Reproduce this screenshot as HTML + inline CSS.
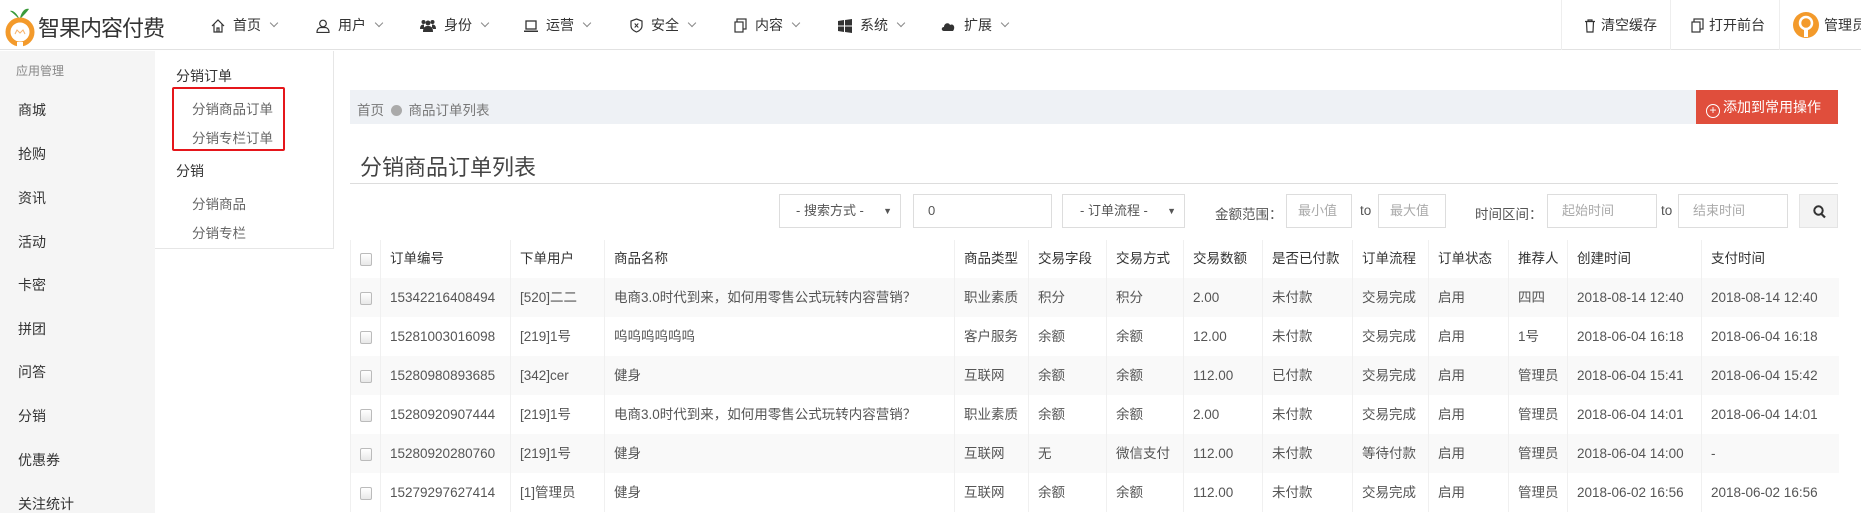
<!DOCTYPE html>
<html><head><meta charset="utf-8"><style>
*{margin:0;padding:0;box-sizing:border-box}
body{width:1861px;height:513px;overflow:hidden;background:#fff;font-family:"Liberation Sans","Noto Sans CJK SC",sans-serif;color:#555;position:relative;font-size:14px}
.a{position:absolute;white-space:nowrap}
.hdr{left:0;top:0;width:1861px;height:50px;border-bottom:1px solid #e2e2e2;background:#fff}
.nav{top:16px;font-size:14px;color:#333;line-height:18px}
.nav svg{vertical-align:-3px;margin-right:8px}
.chev{display:inline-block;width:6px;height:6px;border-right:1px solid #888;border-bottom:1px solid #888;transform:rotate(45deg);margin-left:10px;vertical-align:4px}
.sep{top:0;width:1px;height:50px;background:#eee}
.side{left:0;top:51px;width:155px;height:462px;background:#f5f5f5}
.sub{left:155px;top:51px;width:179px;height:198px;background:#fff;border-right:1px solid #e6e6e6;border-bottom:1px solid #e6e6e6}
.si{left:18px;font-size:14px;color:#333}
.inp{height:34px;border:1px solid #ddd;background:#fff;font-size:13px;color:#aaa;padding:0 0 0 14px;line-height:32px}
table{border-collapse:collapse;table-layout:fixed;position:absolute;left:350px;top:240px;width:1488px}
td,th{height:39px;line-height:39px;padding:0 0 0 9px;font-size:13.5px;text-align:left;white-space:nowrap;overflow:hidden;border-left:1px solid #f0f0f0;vertical-align:middle}
th{font-weight:normal;color:#333;height:38px;line-height:38px;background:#fff}
tr:nth-child(even) td{background:#f9f9f9}
td{color:#555}
.cb{display:inline-block;width:12px;height:13px;border:1px solid #bbb;border-radius:2px;background:linear-gradient(#fff,#e8e8e8);vertical-align:middle}
</style></head><body>
<div class="a hdr"></div>
<svg class="a" style="left:4px;top:6px" width="32" height="42" viewBox="0 0 32 42"><path d="M15 12 C12 6 8 4 6 5 C9 7 11 9 14 12Z M16 12 C18 4 22 2 25 3 C23 6 20 9 17 12Z" fill="#3a9a3a"/><circle cx="16" cy="26" r="12" fill="none" stroke="#f39a2b" stroke-width="5"/><path d="M11 28 L13 24 L16 27 L19 24 L21 28" stroke="#f7b26a" stroke-width="1" fill="none"/><rect x="13" y="36" width="6" height="6" fill="#fff"/></svg>
<div class="a" style="left:38px;top:11px;font-size:22px;color:#333;letter-spacing:-1px">智果内容付费</div>

<div class="a nav" style="left:211px"><svg width="14" height="14" viewBox="0 0 14 14"><path d="M1 7 L7 1 L13 7 M3 5 V13 H11 V5 M6 13 V9 H8 V13" fill="none" stroke="#333" stroke-width="1.2"/></svg>首页<span class="chev"></span></div>
<div class="a nav" style="left:316px"><svg width="14" height="14" viewBox="0 0 14 14"><circle cx="7" cy="4.5" r="3.3" fill="none" stroke="#333" stroke-width="1.2"/><path d="M1 13.5 C1 9 4 8.5 5 8.5 H9 C10 8.5 13 9 13 13.5Z" fill="none" stroke="#333" stroke-width="1.2"/></svg>用户<span class="chev"></span></div>
<div class="a nav" style="left:420px"><svg width="16" height="14" viewBox="0 0 16 14"><circle cx="8" cy="4" r="2.5" fill="#333"/><circle cx="3.5" cy="3" r="2" fill="#333"/><circle cx="12.5" cy="3" r="2" fill="#333"/><path d="M3 13 C3 8 5 7 8 7 C11 7 13 8 13 13Z M0 10 C0 6 2 5.5 4 5.5 L4 10Z M16 10 C16 6 14 5.5 12 5.5 L12 10Z" fill="#333"/></svg>身份<span class="chev"></span></div>
<div class="a nav" style="left:524px"><svg width="14" height="14" viewBox="0 0 14 14"><rect x="2" y="2" width="10" height="8" fill="none" stroke="#333" stroke-width="1.3"/><rect x="0" y="11.5" width="14" height="1.5" fill="#333"/></svg>运营<span class="chev"></span></div>
<div class="a nav" style="left:630px"><svg width="13" height="15" viewBox="0 0 13 15"><path d="M6.5 1 L12 3 V8 C12 11 9 13 6.5 14 C4 13 1 11 1 8 V3Z" fill="none" stroke="#333" stroke-width="1.2"/><path d="M4.7 5.5 L8.3 9.5 M8.3 5.5 L4.7 9.5" stroke="#333" stroke-width="1"/></svg>安全<span class="chev"></span></div>
<div class="a nav" style="left:734px"><svg width="13" height="15" viewBox="0 0 13 15"><rect x="3" y="1" width="9" height="10" fill="none" stroke="#333" stroke-width="1.2"/><rect x="1" y="4" width="8" height="10" fill="#fff" stroke="#333" stroke-width="1.2"/></svg>内容<span class="chev"></span></div>
<div class="a nav" style="left:838px"><svg width="14" height="14" viewBox="0 0 14 14"><path d="M0 2 L6 1 V6.5 H0Z M7 1 L14 0 V6.5 H7Z M0 7.5 H6 V13 L0 12Z M7 7.5 H14 V14 L7 13Z" fill="#333"/></svg>系统<span class="chev"></span></div>
<div class="a nav" style="left:941px"><svg width="15" height="14" viewBox="0 0 15 14"><path d="M3 12 C0 12 0 8 3 8 C3 4 8 3 9 6 C12 4 15 8 12 12Z" fill="#333"/></svg>扩展<span class="chev"></span></div>

<div class="a sep" style="left:1561px"></div><div class="a sep" style="left:1670px"></div><div class="a sep" style="left:1779px"></div>
<div class="a nav" style="left:1584px"><svg width="12" height="14" viewBox="0 0 12 14" style="margin-right:5px"><path d="M1 2.5 H11 M4 2.5 V1 H8 V2.5 M2.5 2.5 L3 13 H9 L9.5 2.5" fill="none" stroke="#333" stroke-width="1.2"/></svg>清空缓存</div>
<div class="a nav" style="left:1691px"><svg width="13" height="15" viewBox="0 0 13 15" style="margin-right:5px"><rect x="3" y="1" width="9" height="10" fill="none" stroke="#333" stroke-width="1.2"/><rect x="1" y="4" width="8" height="10" fill="#fff" stroke="#333" stroke-width="1.2"/></svg>打开前台</div>
<svg class="a" style="left:1792px;top:10px" width="28" height="30" viewBox="0 0 28 30"><circle cx="14" cy="15" r="13" fill="#f39a2b"/><circle cx="14" cy="13" r="6" fill="none" stroke="#fff" stroke-width="2.5"/><rect x="12" y="19" width="4" height="8" fill="#fff"/></svg>
<div class="a nav" style="left:1824px">管理员</div>

<div class="a side"></div>
<div class="a" style="left:16px;top:62px;font-size:12px;color:#888">应用管理</div>
<div class="a si" style="top:100px">商城</div>
<div class="a si" style="top:144px">抢购</div>
<div class="a si" style="top:188px">资讯</div>
<div class="a si" style="top:232px">活动</div>
<div class="a si" style="top:275px">卡密</div>
<div class="a si" style="top:319px">拼团</div>
<div class="a si" style="top:362px">问答</div>
<div class="a si" style="top:406px">分销</div>
<div class="a si" style="top:450px">优惠券</div>
<div class="a si" style="top:494px">关注统计</div>

<div class="a sub"></div>
<div class="a" style="left:176px;top:66px;font-size:14px;color:#333">分销订单</div>
<div class="a" style="left:192px;top:98px;font-size:13.5px;color:#666">分销商品订单</div>
<div class="a" style="left:192px;top:127px;font-size:13.5px;color:#666">分销专栏订单</div>
<div class="a" style="left:172px;top:87px;width:113px;height:64px;border:2px solid #e5161b;border-radius:2px"></div>
<div class="a" style="left:176px;top:161px;font-size:14px;color:#333">分销</div>
<div class="a" style="left:192px;top:193px;font-size:13.5px;color:#666">分销商品</div>
<div class="a" style="left:192px;top:222px;font-size:13.5px;color:#666">分销专栏</div>

<div class="a" style="left:350px;top:90px;width:1488px;height:34px;background:#eef1f5"></div>
<div class="a" style="left:357px;top:99px;font-size:13.5px;color:#777">首页 <span style="display:inline-block;width:11px;height:11px;border-radius:50%;background:#aaa;vertical-align:-1px;margin:0 3px"></span> 商品订单列表</div>
<div class="a" style="left:1696px;top:90px;width:142px;height:34px;background:#e04e3c;color:#fff;font-size:14px;line-height:34px;padding-left:10px"><span style="display:inline-block;width:14px;height:14px;border:1.5px solid #fff;border-radius:50%;text-align:center;line-height:11px;font-size:12px;vertical-align:-2px;margin-right:3px">+</span>添加到常用操作</div>
<div class="a" style="left:360px;top:150px;font-size:22px;color:#444">分销商品订单列表</div>
<div class="a" style="left:350px;top:183px;width:1488px;height:1px;background:#ddd"></div>

<div class="a inp" style="left:779px;top:194px;width:122px;color:#555;padding-left:16px">- 搜索方式 -<span style="position:absolute;right:8px;font-size:9px">▼</span></div>
<div class="a inp" style="left:913px;top:194px;width:139px;color:#555">0</div>
<div class="a inp" style="left:1062px;top:194px;width:123px;color:#555;padding-left:17px">- 订单流程 -<span style="position:absolute;right:8px;font-size:9px">▼</span></div>
<div class="a" style="left:1215px;top:203px;font-size:13.5px;color:#555">金额范围：</div>
<div class="a inp" style="left:1286px;top:194px;width:66px;padding-left:11px">最小值</div>
<div class="a" style="left:1360px;top:203px;font-size:13.5px">to</div>
<div class="a inp" style="left:1378px;top:194px;width:68px;padding-left:11px">最大值</div>
<div class="a" style="left:1475px;top:203px;font-size:13.5px;color:#555">时间区间：</div>
<div class="a inp" style="left:1547px;top:194px;width:110px">起始时间</div>
<div class="a" style="left:1661px;top:203px;font-size:13.5px">to</div>
<div class="a inp" style="left:1678px;top:194px;width:110px">结束时间</div>
<div class="a" style="left:1799px;top:194px;width:39px;height:34px;background:#f3f3f3;border:1px solid #e4e4e4"><svg style="position:absolute;left:13px;top:10px" width="13" height="14" viewBox="0 0 13 14"><circle cx="5.5" cy="5.5" r="4.2" fill="none" stroke="#333" stroke-width="2"/><path d="M8.5 9 L12 12.5" stroke="#333" stroke-width="2.2"/></svg></div>

<table>
<colgroup><col style="width:30px"><col style="width:130px"><col style="width:94px"><col style="width:350px"><col style="width:74px"><col style="width:78px"><col style="width:77px"><col style="width:79px"><col style="width:90px"><col style="width:76px"><col style="width:80px"><col style="width:59px"><col style="width:134px"><col style="width:137px"></colgroup>
<tr><th><span class="cb"></span></th><th>订单编号</th><th>下单用户</th><th>商品名称</th><th>商品类型</th><th>交易字段</th><th>交易方式</th><th>交易数额</th><th>是否已付款</th><th>订单流程</th><th>订单状态</th><th>推荐人</th><th>创建时间</th><th>支付时间</th></tr>
<tr><td><span class="cb"></span></td><td>15342216408494</td><td>[520]二二</td><td>电商3.0时代到来，如何用零售公式玩转内容营销？</td><td>职业素质</td><td>积分</td><td>积分</td><td>2.00</td><td>未付款</td><td>交易完成</td><td>启用</td><td>四四</td><td>2018-08-14 12:40</td><td>2018-08-14 12:40</td></tr>
<tr><td><span class="cb"></span></td><td>15281003016098</td><td>[219]1号</td><td>呜呜呜呜呜呜</td><td>客户服务</td><td>余额</td><td>余额</td><td>12.00</td><td>未付款</td><td>交易完成</td><td>启用</td><td>1号</td><td>2018-06-04 16:18</td><td>2018-06-04 16:18</td></tr>
<tr><td><span class="cb"></span></td><td>15280980893685</td><td>[342]cer</td><td>健身</td><td>互联网</td><td>余额</td><td>余额</td><td>112.00</td><td>已付款</td><td>交易完成</td><td>启用</td><td>管理员</td><td>2018-06-04 15:41</td><td>2018-06-04 15:42</td></tr>
<tr><td><span class="cb"></span></td><td>15280920907444</td><td>[219]1号</td><td>电商3.0时代到来，如何用零售公式玩转内容营销？</td><td>职业素质</td><td>余额</td><td>余额</td><td>2.00</td><td>未付款</td><td>交易完成</td><td>启用</td><td>管理员</td><td>2018-06-04 14:01</td><td>2018-06-04 14:01</td></tr>
<tr><td><span class="cb"></span></td><td>15280920280760</td><td>[219]1号</td><td>健身</td><td>互联网</td><td>无</td><td>微信支付</td><td>112.00</td><td>未付款</td><td>等待付款</td><td>启用</td><td>管理员</td><td>2018-06-04 14:00</td><td>-</td></tr>
<tr><td><span class="cb"></span></td><td>15279297627414</td><td>[1]管理员</td><td>健身</td><td>互联网</td><td>余额</td><td>余额</td><td>112.00</td><td>未付款</td><td>交易完成</td><td>启用</td><td>管理员</td><td>2018-06-02 16:56</td><td>2018-06-02 16:56</td></tr>
</table>
</body></html>
